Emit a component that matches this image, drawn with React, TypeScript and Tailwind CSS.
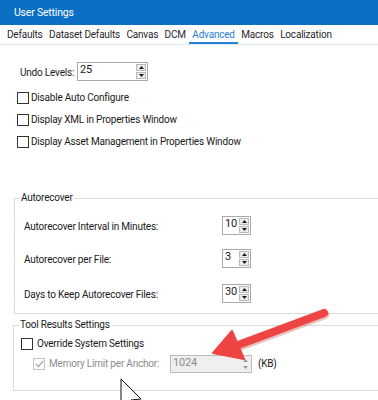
import type { ReactNode } from 'react';

function Tri({ up, disabled }: { up?: boolean; disabled?: boolean }) {
  return (
    <svg width="5" height="3" viewBox="0 0 5 3" className="block">
      <polygon points={up ? '2.5,0 5,3 0,3' : '0,0 5,0 2.5,3'} fill={disabled ? '#9a9a9a' : '#1a1a1a'} />
    </svg>
  );
}

function SpinBox({ value, className, disabled }: { value: string; className: string; disabled?: boolean }) {
  return (
    <div
      className={`flex border ${
        disabled ? 'border-[#bcbcbc] bg-[#efefef] text-[#8c8c8c]' : 'border-[#a9a9a9] bg-white text-[#1a1a1a]'
      } ${className}`}
    >
      <div className="flex-1 pl-[2px] pt-[1px] text-[11px] leading-[12px]">{value}</div>
      <div className="flex flex-col justify-center gap-[1px] py-[1px] pr-[1px]">
        {[true, false].map((up) => (
          <div
            key={String(up)}
            className={`flex h-[7px] w-[10px] items-center justify-center ${
              disabled ? '' : 'border border-[#b9b9b9] bg-[#ececec]'
            }`}
          >
            <Tri up={up} disabled={disabled} />
          </div>
        ))}
      </div>
    </div>
  );
}

function CheckBox({ checked, disabled }: { checked?: boolean; disabled?: boolean }) {
  return (
    <div
      className={`flex h-[12px] w-[12px] shrink-0 items-center justify-center border bg-white ${
        disabled ? 'border-[#c2c2c2]' : 'border-[#333333]'
      }`}
    >
      {checked && (
        <svg width="9" height="8" viewBox="0 0 9 8">
          <path d="M1 4 L3.5 6.5 L8 1" fill="none" stroke={disabled ? '#a8a8a8' : '#222'} strokeWidth="1.2" />
        </svg>
      )}
    </div>
  );
}

function Group({ title, className, children }: { title: string; className: string; children: ReactNode }) {
  return (
    <div className={`relative border border-r-0 border-[#dcdcdc] ${className}`}>
      <span className="absolute -top-[8px] left-[5px] bg-white px-[1px] leading-[14px] text-[#1a1a1a]">{title}</span>
      {children}
    </div>
  );
}

const tabs = ['Defaults', 'Dataset Defaults', 'Canvas', 'DCM', 'Advanced', 'Macros', 'Localization'];

export default function App() {
  return (
    <div className="relative h-[400px] w-[378px] overflow-hidden bg-white font-['Roboto',sans-serif] text-[10px] leading-[14px] tracking-[-0.2px] text-[#1a1a1a]">
      <div className="flex h-[25px] items-center bg-[#0b6fc4] pl-[14px] text-[10.5px] text-white">User Settings</div>

      <div className="flex h-[20px] gap-[0.5px] border-b border-[#dfe5ec] pl-[4px]">
        {tabs.map((t) => (
          <div
            key={t}
            className={`flex items-center border-b-2 px-[3px] pt-[2px] ${
              t === 'Advanced' ? 'border-[#1e86d4] text-[#2b7fd0]' : 'border-transparent text-[#2a1f2e]'
            }`}
          >
            {t}
          </div>
        ))}
      </div>

      <div className="mt-[17px] flex h-[19px] items-center">
        <span className="ml-[20px] w-[57px] pt-[2px]">Undo Levels:</span>
        <SpinBox value="25" className="h-[19px] w-[71px]" />
      </div>

      {['Disable Auto Configure', 'Display XML in Properties Window', 'Display Asset Management in Properties Window'].map(
        (label, i) => (
          <div key={label} className={`flex h-[12px] items-center pl-[17px] ${i === 0 ? 'mt-[11px]' : 'mt-[10px]'}`}>
            <CheckBox />
            <span className="ml-[2px]">{label}</span>
          </div>
        ),
      )}

      <Group title="Autorecover" className="ml-[14px] mt-[50px] h-[116px] pl-[9px]">
        {[
          ['Autorecover Interval in Minutes:', '10', 'mt-[17px]'],
          ['Autorecover per File:', '3', 'mt-[14px]'],
          ['Days to Keep Autorecover Files:', '30', 'mt-[16px]'],
        ].map(([label, v, mt]) => (
          <div key={label} className={`flex h-[19px] items-center ${mt}`}>
            <span className="w-[198px] pt-[3px]">{label}</span>
            <SpinBox value={v} className="h-[19px] w-[29px]" />
          </div>
        ))}
      </Group>

      <Group title="Tool Results Settings" className="ml-[13px] mt-[11px] h-[66px] pl-[7px]">
        <div className="mt-[11px] flex h-[13px] items-center">
          <CheckBox />
          <span className="ml-[4px]">Override System Settings</span>
        </div>
        <div className="mt-[5px] flex h-[18px] items-center pl-[12px]">
          <CheckBox checked disabled />
          <span className="ml-[4px] w-[121px] text-[#8c8c8c]">Memory Limit per Anchor:</span>
          <SpinBox value="1024" disabled className="h-[18px] w-[82px]" />
          <span className="ml-[6px] text-[#1a1a1a]">(KB)</span>
        </div>
      </Group>

      <svg className="pointer-events-none absolute left-0 top-0" width="378" height="400" viewBox="0 0 378 400">
        <line x1="324" y1="313" x2="238" y2="345" stroke="#b83030" strokeWidth="9" strokeLinecap="round" opacity="0.3" transform="translate(1,1.5)" />
        <line x1="324" y1="313" x2="238" y2="345" stroke="#ef4444" strokeWidth="8" strokeLinecap="round" />
        <polygon points="213,353 232,331 244,359" fill="#ef4444" stroke="#ef4444" strokeWidth="2" strokeLinejoin="round" />
        <path d="M121 379 L121 407 L128 401 L133 413 L136 412 L131 400 L141 399 Z" fill="#ffffff" stroke="#111" strokeWidth="1" />
      </svg>
    </div>
  );
}
